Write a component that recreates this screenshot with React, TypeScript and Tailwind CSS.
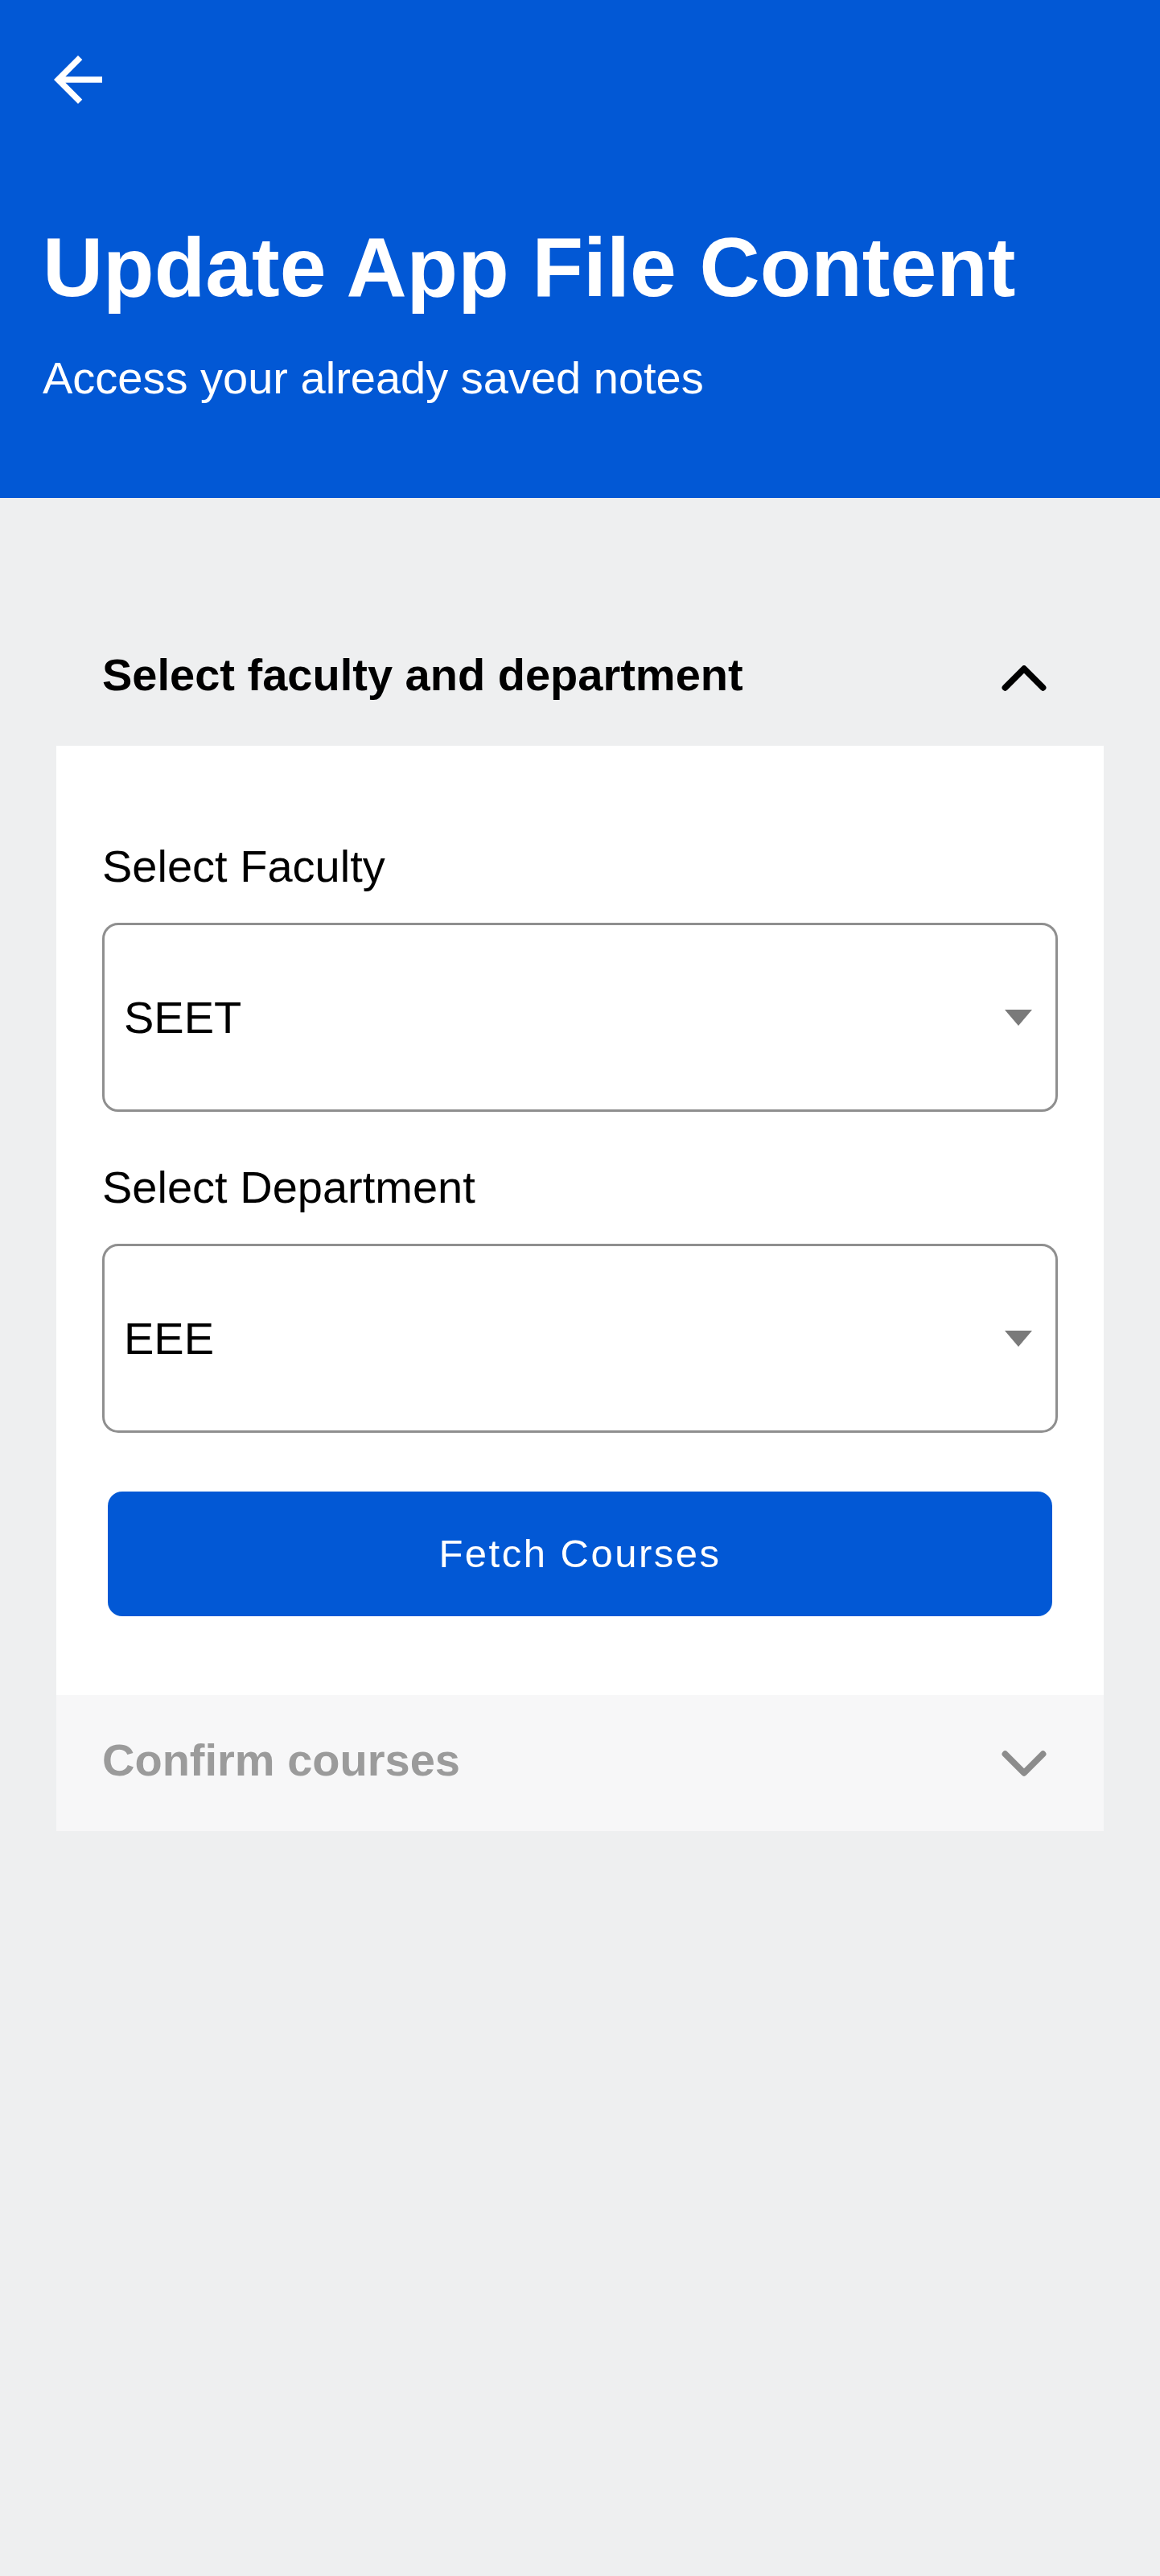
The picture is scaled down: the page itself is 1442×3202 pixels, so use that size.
import React, { useState } from 'react';
import { ChevronUp, ChevronDown } from 'lucide-react';

const ArrowBack: React.FC = () => (
  <svg width={90} height={90} viewBox="0 0 24 24" fill="white">
    <path d="M20 11H7.83l5.59-5.59L12 4l-8 8 8 8 1.41-1.41L7.83 13H20v-2z" />
  </svg>
);

const Caret: React.FC = () => (
  <svg width={34} height={20} viewBox="0 0 34 20">
    <polygon points="0,0 34,0 17,20" fill="#7a7a7a" />
  </svg>
);

interface SelectFieldProps {
  label: string;
  value: string;
  first?: boolean;
}

const SelectField: React.FC<SelectFieldProps> = ({ label, value, first }) => (
  <div className={first ? '' : 'mt-[66px]'}>
    <div className="text-[56px] leading-none text-black">{label}</div>
    <div className="mt-[42px] h-[235px] rounded-[20px] border-[3px] border-[#8f8f8f] bg-white flex items-center justify-between pl-[24px] pr-[29px]">
      <span className="text-[56px] leading-none text-black">{value}</span>
      <Caret />
    </div>
  </div>
);

const App: React.FC = () => {
  const [open, setOpen] = useState(true);

  return (
    <div className="min-h-[3202px] bg-[#eeeff0] font-['Liberation_Sans',Arial,sans-serif]">
      <header className="h-[619px] bg-[#0258d5] pt-[54px] px-[53px]">
        <button className="-ml-[1px] block">
          <ArrowBack />
        </button>
        <h1 className="mt-[136px] text-[104px] leading-none font-bold text-white">Update App File Content</h1>
        <p className="mt-[58px] text-[56px] leading-none text-white">Access your already saved notes</p>
      </header>

      <main className="px-[70px] pt-[139px]">
        {/* faculty / department step */}
        <div
          className="h-[169px] flex items-center justify-between pl-[57px] pr-[52px] cursor-pointer"
          onClick={() => setOpen(!open)}
        >
          <span className="text-[56px] leading-none font-bold text-black -mt-[8px]">Select faculty and department</span>
          {open ? (
            <ChevronUp size={94} strokeWidth={2} color="#000" />
          ) : (
            <ChevronDown size={94} strokeWidth={2} color="#000" />
          )}
        </div>
        {open && (
          <div className="bg-white px-[57px] pt-[122px] pb-[98px]">
            <SelectField label="Select Faculty" value="SEET" first />
            <SelectField label="Select Department" value="EEE" />
            <button className="mt-[73px] mx-[7px] w-[calc(100%-14px)] h-[155px] rounded-[18px] bg-[#0258d5] text-white text-[49px] leading-none tracking-[2.5px]">
              Fetch Courses
            </button>
          </div>
        )}

        <div className="h-[169px] bg-[#f7f7f8] flex items-center justify-between pl-[57px] pr-[52px]">
          <span className="text-[56px] leading-none font-bold text-[#9b9b9b] -mt-[8px]">Confirm courses</span>
          <ChevronDown size={94} strokeWidth={2} color="#8c8c8c" />
        </div>
      </main>
    </div>
  );
};

export default App;
